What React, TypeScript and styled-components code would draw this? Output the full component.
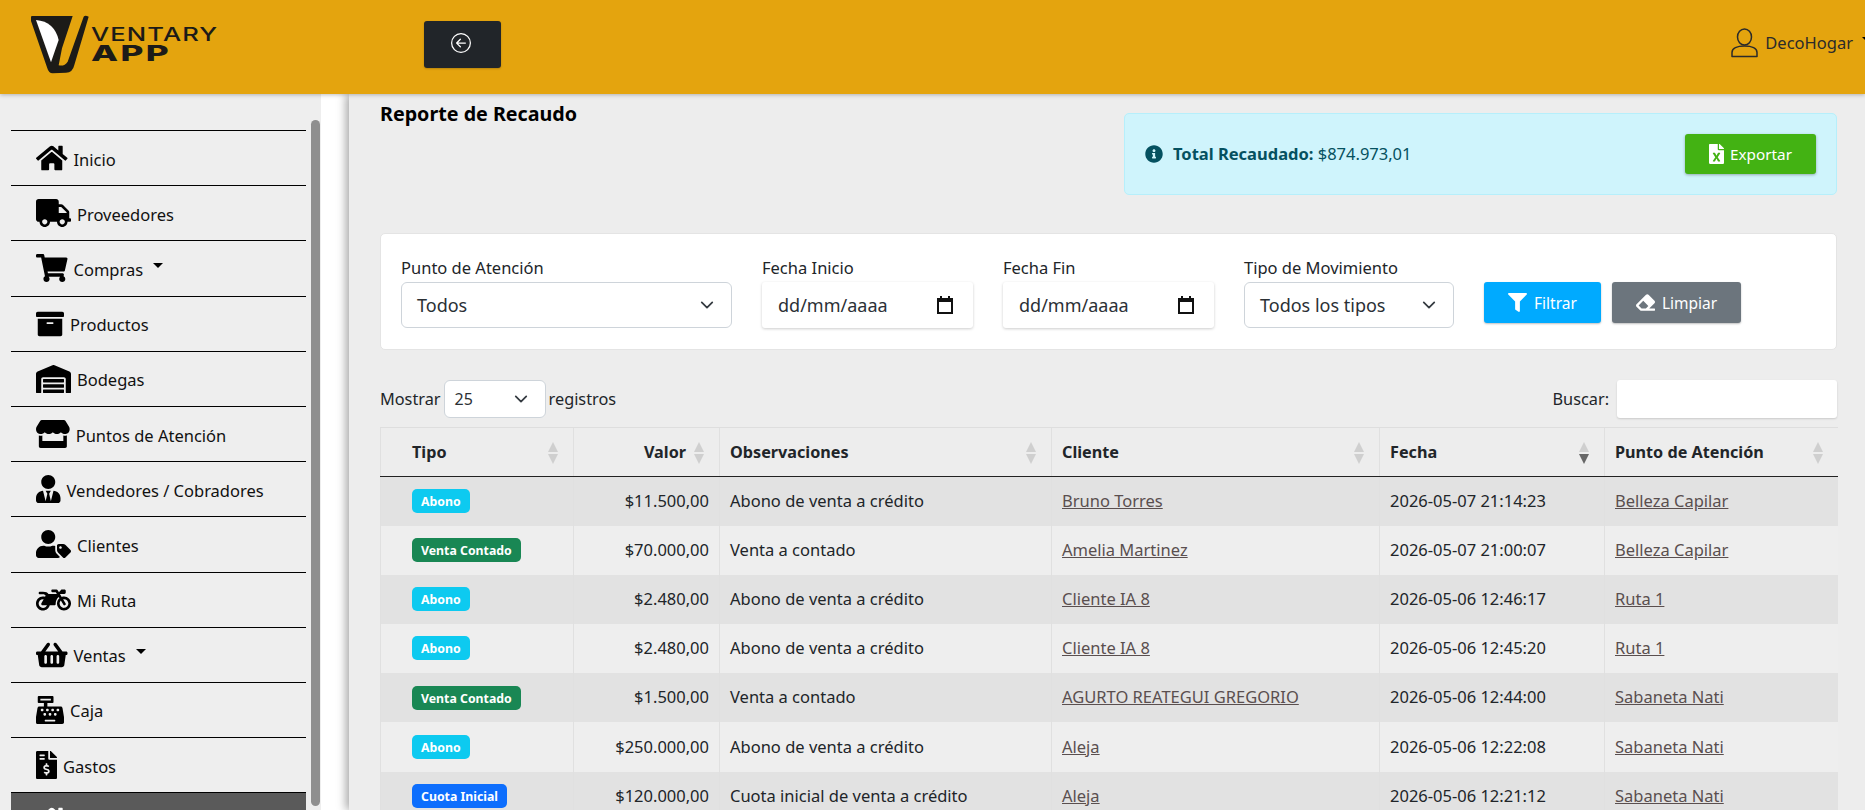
import React, { FC } from "react";
import styled, { createGlobalStyle } from "styled-components";
import {
  FaHome,
  FaTruck,
  FaShoppingCart,
  FaArchive,
  FaWarehouse,
  FaStore,
  FaUserTie,
  FaUserTag,
  FaMotorcycle,
  FaShoppingBasket,
  FaCashRegister,
  FaFileInvoiceDollar,
  FaInfoCircle,
  FaFileExcel,
  FaFilter,
  FaEraser,
} from "react-icons/fa";
import { BsArrowLeftCircle } from "react-icons/bs";

const FONT = `"Noto Sans", "Open Sans", sans-serif`;

const GlobalStyle = createGlobalStyle`
  html, body {
    margin: 0;
    height: 100%;
    overflow: hidden;
    background: #ededed;
    font-family: ${FONT};
    color: #212529;
  }
  * { box-sizing: border-box; }
`;

const Page = styled.div`
  width: 1865px;
  height: 810px;
  display: flex;
  flex-direction: column;
  overflow: hidden;
`;

const Header = styled.header`
  position: relative;
  z-index: 3;
  flex: 0 0 94px;
  display: flex;
  align-items: flex-start;
  background: #e4a40e;
  box-shadow: 0 1px 4px rgba(0, 0, 0, 0.25);
`;

const Logo = styled.div`
  display: flex;
  width: 424px;
  padding: 15px 0 0 31px;
  color: #1c1b18;
`;

const LogoWords = styled.div`
  display: flex;
  flex-direction: column;
  align-items: flex-start;
  margin: 10px 0 0 0;
  font-family: Inter, sans-serif;
`;

const LogoTop = styled.span`
  font-size: 19px;
  font-weight: 500;
  line-height: 19px;
  letter-spacing: 0.8px;
  transform: scaleX(1.35);
  transform-origin: left center;
`;

const LogoBottom = styled.span`
  font-size: 22px;
  font-weight: 800;
  line-height: 18px;
  letter-spacing: 1.5px;
  transform: scaleX(1.6);
  transform-origin: left center;
`;

const BackButton = styled.button`
  margin-top: 21px;
  width: 77px;
  height: 47px;
  padding: 0 3px 3px 0;
  display: flex;
  align-items: center;
  justify-content: center;
  border: 0;
  border-radius: 3px;
  background: #212529;
  color: #fff;
  font-size: 20px;
  box-shadow: 0 1px 2px rgba(0, 0, 0, 0.2);
`;

const UserArea = styled.div`
  margin-left: auto;
  margin-right: -7px;
  height: 94px;
  display: flex;
  align-items: center;
  gap: 5px;
  padding-bottom: 9px;
  font-size: 16.5px;
  color: #2b2b2b;
  svg {
    margin-right: 2px;
  }
`;

const Caret = styled.span`
  display: inline-block;
  width: 0;
  height: 0;
  margin-left: 4px;
  margin-bottom: 6px;
  border-top: 5px solid #000;
  border-left: 5px solid transparent;
  border-right: 5px solid transparent;
`;

const Body = styled.div`
  flex: 1;
  display: flex;
  min-height: 0;
`;

const Sidebar = styled.aside`
  flex: 0 0 349px;
  display: flex;
  background: #fff;
`;

const SideInner = styled.div`
  flex: 0 0 321px;
  display: flex;
  background: #eeeeee;
  overflow: hidden;
`;

const Nav = styled.nav`
  flex: 0 0 306px;
  padding: 36px 0 0 11px;
`;

const NavItem = styled.a<{ $active?: boolean }>`
  display: flex;
  align-items: center;
  gap: 6px;
  height: 55.2px;
  padding-left: 25px;
  border-top: 1px solid #000;
  font-size: 16.5px;
  color: ${(props) => (props.$active ? "#fff" : "#111")};
  background: ${(props) => (props.$active ? "#5a5a5a" : "transparent")};
  span:first-of-type {
    padding-top: 2px;
  }
`;

const NavIcon = styled.i<{ $width: number; $active?: boolean }>`
  flex: none;
  display: flex;
  width: ${(props) => props.$width}px;
  height: 28px;
  color: ${(props) => (props.$active ? "#fff" : "#000")};
  svg {
    width: 100%;
    height: 100%;
  }
`;

const ScrollTrack = styled.div`
  padding: 26px 0 0 5px;
`;

const ScrollThumb = styled.div`
  width: 9px;
  height: 686px;
  border-radius: 5px;
  background: #8f8f8f;
`;

const Main = styled.main`
  position: relative;
  z-index: 2;
  flex: 1;
  min-width: 0;
  padding: 6px 28px 0 31px;
  background: #ededed;
  box-shadow: -3px 0 9px rgba(0, 0, 0, 0.35);
  overflow: hidden;
`;

const TopRow = styled.div`
  display: flex;
  justify-content: space-between;
  align-items: flex-start;
`;

const Title = styled.h1`
  margin: 0;
  font-size: 19.7px;
  line-height: 28px;
  font-weight: 700;
  color: #000;
`;

const Alert = styled.div`
  width: 713px;
  height: 82px;
  margin-top: 13px;
  display: flex;
  align-items: center;
  padding: 0 20px;
  border: 1px solid #b6effb;
  border-radius: 5px;
  background: #cff4fc;
  color: #055160;
  font-size: 16.5px;
  > svg {
    font-size: 18px;
  }
`;

const AlertText = styled.span`
  margin-left: 10px;
  padding-bottom: 2px;
  b {
    font-weight: 700;
  }
`;

const ExportButton = styled.button`
  margin-left: auto;
  width: 131px;
  height: 40px;
  display: flex;
  align-items: center;
  justify-content: center;
  gap: 6px;
  border: 0;
  border-radius: 3px;
  background: #43b213;
  color: #fff;
  font-family: ${FONT};
  font-size: 15.3px;
  box-shadow: 0 1px 3px rgba(0, 0, 0, 0.3);
  svg {
    width: 15px;
    height: 20px;
  }
`;

const FilterCard = styled.section`
  margin-top: 38px;
  height: 117px;
  display: flex;
  align-items: flex-start;
  gap: 30px;
  padding: 22px 20px 0;
  background: #fff;
  border: 1px solid #e4e4e4;
  border-radius: 5px;
`;

const Group = styled.div<{ $width: number }>`
  width: ${(props) => props.$width}px;
`;

const Label = styled.div`
  font-size: 16.5px;
  line-height: 24px;
  margin-bottom: 2px;
  color: #212529;
`;

const SelectBox = styled.div<{ $small?: boolean }>`
  display: flex;
  align-items: center;
  justify-content: space-between;
  height: ${(props) => (props.$small ? 38 : 46)}px;
  padding: ${(props) => (props.$small ? "0 17px 0 10px" : "0 17px 0 15px")};
  background: #fff;
  border: 1px solid #ced4da;
  border-radius: 6px;
  font-size: ${(props) => (props.$small ? 16 : 18)}px;
  color: #2b3035;
`;

const DateBox = styled.div`
  display: flex;
  align-items: center;
  justify-content: space-between;
  height: 46px;
  padding: 0 20px 0 16px;
  background: #fff;
  border-radius: 3px;
  box-shadow: 0 1px 3px rgba(0, 0, 0, 0.2);
  font-size: 18px;
  color: #2b3035;
`;

const ActionButton = styled.button<{ $bg: string }>`
  width: ${(props) => (props.$bg === "#00aaff" ? 117 : 129)}px;
  height: 41px;
  margin-top: 26px;
  margin-left: ${(props) => (props.$bg === "#00aaff" ? 0 : -19)}px;
  display: flex;
  align-items: center;
  justify-content: center;
  gap: 7px;
  border: 0;
  border-radius: 3px;
  background: ${(props) => props.$bg};
  color: #fff;
  font-family: ${FONT};
  font-size: 15.5px;
  box-shadow: 0 1px 2px rgba(0, 0, 0, 0.25);
  svg {
    font-size: 19px;
  }
`;

const Controls = styled.div`
  margin-top: 30px;
  height: 38px;
  display: flex;
  align-items: center;
  justify-content: space-between;
  font-size: 16.3px;
`;

const ControlGroup = styled.div`
  display: flex;
  align-items: center;
  gap: 3px;
`;

const SearchBox = styled.div`
  width: 220px;
  height: 38px;
  margin-left: 5px;
  background: #fff;
  border-radius: 3px;
  box-shadow: 0 1px 2px rgba(0, 0, 0, 0.15);
`;

const Table = styled.table`
  margin-top: 9px;
  width: 1457px;
  table-layout: fixed;
  border-collapse: collapse;
  font-size: 16.5px;
`;

const Th = styled.th<{ $right?: boolean; $first?: boolean }>`
  position: relative;
  height: 49px;
  padding: 0 ${(props) => (props.$right ? 33 : 10)}px 0 ${(props) => (props.$first ? 31 : 10)}px;
  text-align: ${(props) => (props.$right ? "right" : "left")};
  font-size: 16.2px;
  font-weight: 700;
  color: #212529;
  border-top: 1px solid #dedede;
  border-left: 1px solid #e0e0e0;
  border-bottom: 1px solid #222;
`;

const Td = styled.td<{ $first?: boolean; $right?: boolean }>`
  height: 49.2px;
  padding: 0 10px 2px ${(props) => (props.$first ? 31 : 10)}px;
  text-align: ${(props) => (props.$right ? "right" : "left")};
  border-left: 1px solid #e0e0e0;
  white-space: nowrap;
  a {
    color: #5a4f4f;
    text-decoration: underline;
  }
`;

const Row = styled.tr<{ $odd: boolean }>`
  background: ${(props) => (props.$odd ? "#e2e2e2" : "#eeeeee")};
`;

const SortIcons = styled.span<{ $active?: boolean }>`
  position: absolute;
  right: 15px;
  top: 14px;
  display: flex;
  flex-direction: column;
  gap: 2px;
  &::before,
  &::after {
    content: "";
    width: 0;
    height: 0;
    border-left: 5px solid transparent;
    border-right: 5px solid transparent;
  }
  &::before {
    border-bottom: 10px solid #cfcfcf;
  }
  &::after {
    border-top: 10px solid ${(props) => (props.$active ? "#666" : "#cfcfcf")};
  }
`;

const Badge = styled.span<{ $kind: string }>`
  display: inline-block;
  height: 24px;
  padding: 0 9px;
  border-radius: 5px;
  vertical-align: middle;
  background: ${(props) =>
    props.$kind === "Abono" ? "#0dcaf0" : props.$kind === "Venta Contado" ? "#198754" : "#0d6efd"};
  color: #fff;
  font-size: 12.3px;
  font-weight: 700;
  line-height: 25px;
`;

const Chevron: FC = () => (
  <svg width="14" height="14" viewBox="0 0 16 16" fill="none" stroke="#343a40" strokeWidth="2" strokeLinecap="round" strokeLinejoin="round">
    <path d="m2 5 6 6 6-6" />
  </svg>
);

const CalendarIcon: FC = () => (
  <svg width="16" height="18" viewBox="0 0 16 18">
    <path d="M3 0h2v2h6V0h2v2h3v16H0V2h3zM2 6v10h12V6z" fill="#111" />
  </svg>
);

const UserIcon: FC = () => (
  <svg width="27" height="30" viewBox="0 0 27 30" fill="none" stroke="#2b2b2b" strokeWidth="1.5">
    <ellipse cx="13.5" cy="9" rx="7" ry="8" />
    <path d="M1 28.500v-4c0-4 5-6.500 12.500-6.500S26 20.500 26 24.500v4z" strokeLinejoin="round" />
  </svg>
);

const LogoMark: FC = () => (
  <svg width="60" height="60" viewBox="35 30 180 180">
    <path
      d="M38 33L160 33L128 130L118 181Q135 185 145 170L193 35Q197 30 208 35L165 180Q160 203 140 203L100 205Q88 205 84 190L35 48Q32 35 38 33Z"
      fill="#1c1b18"
    />
    <path d="M50 45Q105 50 118 105L95 172Z" fill="#fff" />
  </svg>
);

const menu = [
  { label: "Inicio", Icon: FaHome, width: 31.5 },
  { label: "Proveedores", Icon: FaTruck, width: 35 },
  { label: "Compras", Icon: FaShoppingCart, width: 31.5, caret: true },
  { label: "Productos", Icon: FaArchive, width: 28 },
  { label: "Bodegas", Icon: FaWarehouse, width: 35 },
  { label: "Puntos de Atención", Icon: FaStore, width: 33.7 },
  { label: "Vendedores / Cobradores", Icon: FaUserTie, width: 24.5 },
  { label: "Clientes", Icon: FaUserTag, width: 35 },
  { label: "Mi Ruta", Icon: FaMotorcycle, width: 35 },
  { label: "Ventas", Icon: FaShoppingBasket, width: 31.5, caret: true },
  { label: "Caja", Icon: FaCashRegister, width: 28 },
  { label: "Gastos", Icon: FaFileInvoiceDollar, width: 21 },
  { label: "Recaudo", Icon: FaHome, width: 31.5, active: true },
];

const columns = [
  { label: "Tipo", width: 193, first: true },
  { label: "Valor", width: 146, right: true },
  { label: "Observaciones", width: 332 },
  { label: "Cliente", width: 328 },
  { label: "Fecha", width: 225, active: true },
  { label: "Punto de Atención", width: 233 },
];

const rows = [
  ["Abono", "$11.500,00", "Abono de venta a crédito", "Bruno Torres", "2026-05-07 21:14:23", "Belleza Capilar"],
  ["Venta Contado", "$70.000,00", "Venta a contado", "Amelia Martinez", "2026-05-07 21:00:07", "Belleza Capilar"],
  ["Abono", "$2.480,00", "Abono de venta a crédito", "Cliente IA 8", "2026-05-06 12:46:17", "Ruta 1"],
  ["Abono", "$2.480,00", "Abono de venta a crédito", "Cliente IA 8", "2026-05-06 12:45:20", "Ruta 1"],
  ["Venta Contado", "$1.500,00", "Venta a contado", "AGURTO REATEGUI GREGORIO", "2026-05-06 12:44:00", "Sabaneta Nati"],
  ["Abono", "$250.000,00", "Abono de venta a crédito", "Aleja", "2026-05-06 12:22:08", "Sabaneta Nati"],
  ["Cuota Inicial", "$120.000,00", "Cuota inicial de venta a crédito", "Aleja", "2026-05-06 12:21:12", "Sabaneta Nati"],
];

const App: FC = () => (
  <Page>
    <GlobalStyle />
    <Header>
      <Logo>
        <LogoMark />
        <LogoWords>
          <LogoTop>VENTARY</LogoTop>
          <LogoBottom>APP</LogoBottom>
        </LogoWords>
      </Logo>
      <BackButton>
        <BsArrowLeftCircle />
      </BackButton>
      <UserArea>
        <UserIcon />
        <span>DecoHogar</span>
        <Caret />
      </UserArea>
    </Header>
    <Body>
      <Sidebar>
        <SideInner>
          <Nav>
            {menu.map(({ label, Icon, width, caret, active }) => (
              <NavItem key={label} $active={active}>
                <NavIcon $width={width} $active={active}>
                  <Icon />
                </NavIcon>
                <span>{label}</span>
                {caret && <Caret />}
              </NavItem>
            ))}
          </Nav>
          <ScrollTrack>
            <ScrollThumb />
          </ScrollTrack>
        </SideInner>
      </Sidebar>
      <Main>
        <TopRow>
          <Title>Reporte de Recaudo</Title>
          <Alert>
            <FaInfoCircle />
            <AlertText>
              <b>Total Recaudado:</b> $874.973,01
            </AlertText>
            <ExportButton>
              <FaFileExcel />
              Exportar
            </ExportButton>
          </Alert>
        </TopRow>
        <FilterCard>
          <Group $width={331}>
            <Label>Punto de Atención</Label>
            <SelectBox>
              Todos
              <Chevron />
            </SelectBox>
          </Group>
          <Group $width={211}>
            <Label>Fecha Inicio</Label>
            <DateBox>
              dd/mm/aaaa
              <CalendarIcon />
            </DateBox>
          </Group>
          <Group $width={211}>
            <Label>Fecha Fin</Label>
            <DateBox>
              dd/mm/aaaa
              <CalendarIcon />
            </DateBox>
          </Group>
          <Group $width={210}>
            <Label>Tipo de Movimiento</Label>
            <SelectBox>
              Todos los tipos
              <Chevron />
            </SelectBox>
          </Group>
          <ActionButton $bg="#00aaff">
            <FaFilter />
            Filtrar
          </ActionButton>
          <ActionButton $bg="#6c757d">
            <FaEraser />
            Limpiar
          </ActionButton>
        </FilterCard>
        <Controls>
          <ControlGroup>
            Mostrar
            <Group $width={102}>
              <SelectBox $small>
                25
                <Chevron />
              </SelectBox>
            </Group>
            registros
          </ControlGroup>
          <ControlGroup>
            Buscar:
            <SearchBox />
          </ControlGroup>
        </Controls>
        <Table>
          <colgroup>
            {columns.map((col) => (
              <col key={col.label} width={col.width} />
            ))}
          </colgroup>
          <thead>
            <tr>
              {columns.map((col) => (
                <Th key={col.label} $right={col.right} $first={col.first}>
                  {col.label}
                  <SortIcons $active={col.active} />
                </Th>
              ))}
            </tr>
          </thead>
          <tbody>
            {rows.map((row, i) => (
              <Row key={i} $odd={i % 2 === 0}>
                <Td $first>
                  <Badge $kind={row[0]}>{row[0]}</Badge>
                </Td>
                <Td $right>{row[1]}</Td>
                <Td>{row[2]}</Td>
                <Td>
                  <a href="#cliente">{row[3]}</a>
                </Td>
                <Td>{row[4]}</Td>
                <Td>
                  <a href="#punto">{row[5]}</a>
                </Td>
              </Row>
            ))}
          </tbody>
        </Table>
      </Main>
    </Body>
  </Page>
);

export default App;
